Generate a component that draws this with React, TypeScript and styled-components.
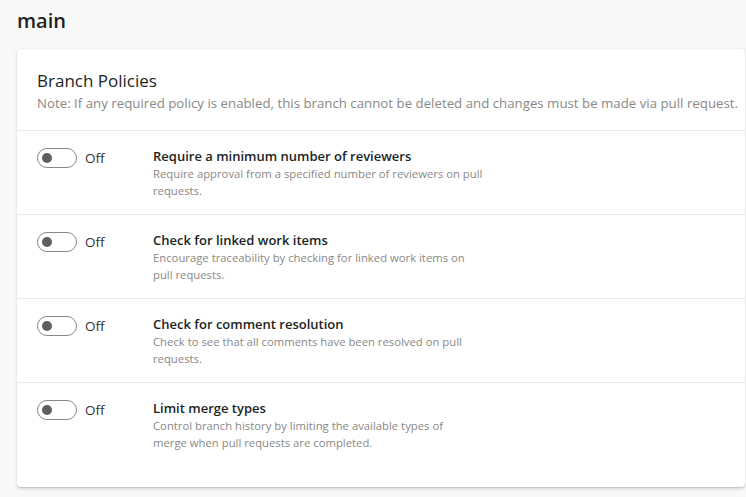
import React from "react";
import styled, { createGlobalStyle } from "styled-components";

const Global = createGlobalStyle`
  html, body { margin: 0; padding: 0; background: #f8f8f8; }
  body { font-family: "Open Sans", "Noto Sans", sans-serif; color: #323130; }
  * { box-sizing: border-box; }
`;

const Page = styled.div`
  padding: 8px 1px 0 17px;
  width: 746px;
  height: 497px;
  overflow: hidden;
`;

const PageTitle = styled.h1`
  margin: 0;
  font-size: 20px;
  font-weight: 600;
  line-height: 26px;
  color: #201f1e;
`;

const Card = styled.section`
  margin-top: 15px;
  background: #fff;
  border-radius: 4px;
  box-shadow: 0 1.6px 3.6px rgba(0,0,0,0.13), 0 0.3px 0.9px rgba(0,0,0,0.11);
  padding-bottom: 20px;
`;

const CardHeader = styled.div`
  padding: 20px 20px 16px 20px;
  border-bottom: 1px solid #eaeaea;
`;

const CardTitle = styled.h2`
  margin: 0;
  font-size: 17px;
  font-weight: 400;
  line-height: 24px;
  color: #201f1e;
`;

const Note = styled.p`
  margin: 0;
  font-size: 13.27px;
  line-height: 21px;
  color: #8a8886;
  white-space: nowrap;
`;

const Row = styled.div<{ $last?: boolean }>`
  display: grid;
  grid-template-columns: 116px 1fr;
  padding: 17px 20px 0 20px;
  height: 84px;
  border-bottom: ${(p) => (p.$last ? "none" : "1px solid #eaeaea")};
`;

const ToggleWrap = styled.div`
  display: flex;
  align-items: flex-start;
  gap: 8px;
`;

const Track = styled.span`
  position: relative;
  width: 40px;
  height: 20px;
  border: 1px solid #8a8886;
  border-radius: 10px;
  background: #fff;
  flex: none;
`;

const Knob = styled.span`
  position: absolute;
  left: 4px;
  top: 4px;
  width: 10px;
  height: 10px;
  border-radius: 50%;
  background: #605e5c;
`;

const ToggleLabel = styled.span`
  font-size: 13.5px;
  line-height: 20px;
  color: #323130;
`;

const Text = styled.div`
  max-width: 340px;
`;

const PolicyTitle = styled.div`
  font-size: 13px;
  font-weight: 600;
  line-height: 17px;
  color: #201f1e;
`;

const PolicyDesc = styled.div`
  font-size: 11.3px;
  line-height: 17px;
  color: #8a8886;
`;

const DescLine = styled.span`
  display: block;
  white-space: nowrap;
`;

const policies = [
  {
    title: "Require a minimum number of reviewers",
    desc: ["Require approval from a specified number of reviewers on pull", "requests."],
  },
  {
    title: "Check for linked work items",
    desc: ["Encourage traceability by checking for linked work items on", "pull requests."],
  },
  {
    title: "Check for comment resolution",
    desc: ["Check to see that all comments have been resolved on pull", "requests."],
  },
  {
    title: "Limit merge types",
    desc: ["Control branch history by limiting the available types of", "merge when pull requests are completed."],
  },
];

export default function App() {
  return (
    <>
      <Global />
      <Page>
        <PageTitle>main</PageTitle>
        <Card>
          <CardHeader>
            <CardTitle>Branch Policies</CardTitle>
            <Note>
              Note: If any required policy is enabled, this branch cannot be deleted and changes must be made via pull request.
            </Note>
          </CardHeader>
          {policies.map((p, i) => (
            <Row key={p.title} $last={i === policies.length - 1}>
              <ToggleWrap>
                <Track>
                  <Knob />
                </Track>
                <ToggleLabel>Off</ToggleLabel>
              </ToggleWrap>
              <Text>
                <PolicyTitle>{p.title}</PolicyTitle>
                <PolicyDesc>
                  {p.desc.map((line) => (
                    <DescLine key={line}>{line}</DescLine>
                  ))}
                </PolicyDesc>
              </Text>
            </Row>
          ))}
        </Card>
      </Page>
    </>
  );
}
